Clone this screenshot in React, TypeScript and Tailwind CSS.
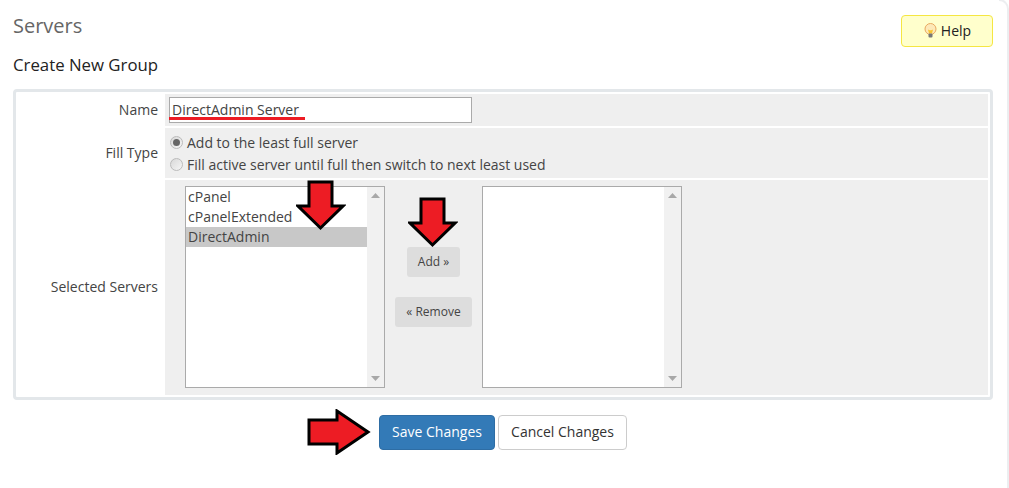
const SANS = "font-['Open_Sans',sans-serif]";

function Row({ label, className, labelClass = 'pb-[1px]', children }: { label: string; className: string; labelClass?: string; children: React.ReactNode }) {
  return (
    <div className={`flex gap-[2px] ${className}`}>
      <div className={`w-[145px] shrink-0 flex items-center justify-end pr-[5px] text-[14px] text-[#444] ${labelClass}`}>{label}</div>
      <div className="flex-1 bg-[#efefef]">{children}</div>
    </div>
  );
}

function Radio({ checked, label }: { checked?: boolean; label: string }) {
  return (
    <div className="flex items-center h-[22px] pl-[5px]">
      <span className="w-[13px] h-[13px] rounded-full border border-[#bbb] bg-gradient-to-br from-[#d8d8d8] to-[#f6f6f6] flex items-center justify-center">
        {checked && <span className="w-[7px] h-[7px] rounded-full bg-[#666]" />}
      </span>
      <span className="ml-[4px] text-[14px] text-[#444]">{label}</span>
    </div>
  );
}

function ListBox({ items, selected }: { items: string[]; selected?: string }) {
  return (
    <div className="w-[200px] h-[202px] border border-[#aaa] bg-white flex">
      <div className="flex-1 text-[14px] leading-[20px] text-[#444]">
        {items.map(item => (
          <div key={item} className={`pl-[2px] h-[20px] ${item === selected ? 'bg-[#c8c8c8]' : ''}`}>{item}</div>
        ))}
      </div>
      <div className="w-[17px] bg-[#f1f1f1] flex flex-col items-center justify-between py-[6px]">
        <svg width="9" height="5" viewBox="0 0 9 5"><path d="M4.5 0 9 5H0z" fill="#a8a8a8" /></svg>
        <svg width="9" height="5" viewBox="0 0 9 5"><path d="M0 0h9L4.5 5z" fill="#a8a8a8" /></svg>
      </div>
    </div>
  );
}

function DownArrow({ className }: { className: string }) {
  return (
    <svg className={`absolute ${className}`} width="50" height="51" viewBox="0 0 50 51">
      <path d="M13 2h23v24h11L24.5 48 2 26h11z" fill="#ed1c24" stroke="#000" strokeWidth="3" />
    </svg>
  );
}

function Bulb() {
  return (
    <svg width="15" height="16" viewBox="0 0 15 16">
      <circle cx="7.5" cy="6" r="5.5" fill="#fde9b8" stroke="#e8a860" />
      <path d="M5 6.5c1 1 4 1 5 0l-1 4H6z" fill="#f7c531" />
      <rect x="5.5" y="10.5" width="4" height="4" rx="1" fill="#777" />
    </svg>
  );
}

export default function App() {
  return (
    <div className={`${SANS} relative w-[1009px] h-[488px] bg-white overflow-hidden`}>
      <div className="flex items-start justify-between pl-[13px] pr-[16px] pt-[15px]">
        <h1 className="-mt-[1px] text-[20px] leading-[24px] text-[#666]">Servers</h1>
        <button className="w-[92px] h-[32px] pb-[1px] border border-[#f5e642] rounded-[4px] bg-[#ffffcc] flex items-center justify-center gap-[3px] text-[14px] text-[#222]">
          <Bulb />
          Help
        </button>
      </div>
      <h2 className="pl-[13px] mt-[7px] text-[16.8px] leading-[22px] text-[#222]">Create New Group</h2>

      <div className="ml-[13px] mt-[13px] w-[980px] border-[3px] border-[#e3e7ea] rounded-[4px] p-[2px] flex flex-col gap-[2px]">
        <Row label="Name" className="h-[32px]">
          <div className="pl-[4px] pt-[3px]">
            <div className="w-[303px] h-[26px] border border-[#aaa] bg-white pl-[2px] text-[14px] leading-[24px] text-[#444]">DirectAdmin Server</div>
          </div>
        </Row>
        <Row label="Fill Type" className="h-[50px]">
          <div className="pt-[3px]">
            <Radio checked label="Add to the least full server" />
            <Radio label="Fill active server until full then switch to next least used" />
          </div>
        </Row>
        <Row label="Selected Servers" className="h-[215px]" labelClass="pb-[3px]">
          <div className="flex pl-[20px] pt-[6px]">
            <ListBox items={['cPanel', 'cPanelExtended', 'DirectAdmin']} selected="DirectAdmin" />
            <div className="w-[97px] flex flex-col items-center pt-[61px] gap-[20px]">
              <button className="w-[53px] h-[30px] rounded-[3px] bg-[#dddddd] text-[12px] text-[#444]">Add »</button>
              <button className="w-[77px] h-[30px] rounded-[3px] bg-[#dddddd] text-[12px] text-[#444]">« Remove</button>
            </div>
            <ListBox items={[]} />
          </div>
        </Row>
      </div>

      <div className="flex justify-center gap-[3px] mt-[15px] pr-[3px]">
        <button className="w-[116px] h-[35px] pb-[3px] rounded-[4px] border border-[#2e6da4] bg-[#337ab7] text-[14px] text-white">Save Changes</button>
        <button className="w-[129px] h-[35px] pb-[3px] rounded-[4px] border border-[#ccc] bg-white text-[14px] text-[#333]">Cancel Changes</button>
      </div>

      {/* annotations drawn over the screenshot */}
      <div className="absolute left-[169px] top-[117px] w-[136px] h-[3px] bg-[#ed1c24]" />
      <DownArrow className="left-[296px] top-[180px]" />
      <DownArrow className="left-[408px] top-[197px]" />
      <svg className="absolute left-[307px] top-[409px]" width="64" height="46" viewBox="0 0 64 46">
        <path d="M2 11h28V2l31 21-31 21v-9H2z" fill="#ed1c24" stroke="#000" strokeWidth="3" />
      </svg>
      <div className="absolute right-0 -top-[1px] w-[10px] h-[490px] border-t-2 border-r-2 border-[#eceef0] rounded-tr-[10px]" />
    </div>
  );
}
